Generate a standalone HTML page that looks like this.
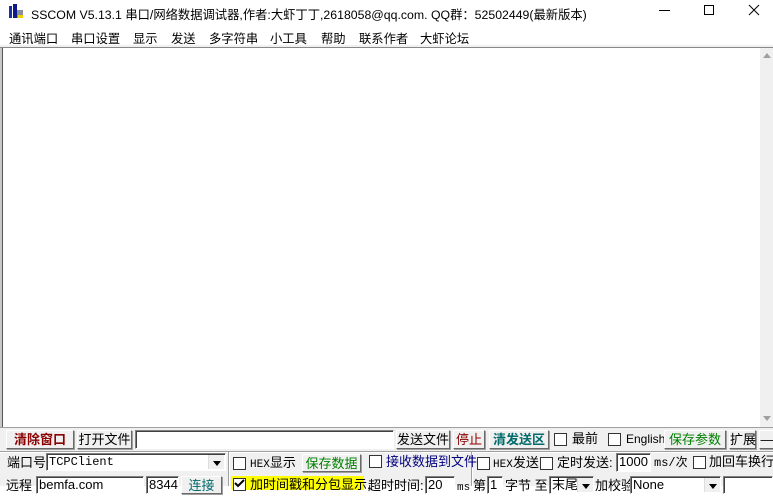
<!DOCTYPE html>
<html><head><meta charset="utf-8"><style>
*{margin:0;padding:0;box-sizing:border-box}
body{width:773px;height:486px;overflow:hidden;background:#fff;font-family:"Liberation Sans","Noto Sans CJK SC",sans-serif;font-size:12px;color:#000;position:relative}
.a{position:absolute;white-space:nowrap}
.m{position:absolute;white-space:nowrap;top:29px;font-size:12.3px}
.btn{position:absolute;background:#f0f0f0;border:1px solid;border-color:#fff #696969 #696969 #fff;box-shadow:1px 1px 0 #a0a0a0;text-align:center;font-size:13px;line-height:17px;white-space:nowrap}
.inp{position:absolute;background:#fff;border:1px solid;border-color:#808080 #fff #fff #808080;box-shadow:inset 1px 1px 0 #404040;font-size:13px;line-height:16px;padding-left:2px;white-space:nowrap;overflow:hidden}
.cb{position:absolute;width:13px;height:13px;background:#fff;border:1px solid #333}
.t{position:absolute;font-size:13px;white-space:nowrap;line-height:16px}
.mono{font-family:"Liberation Mono","Noto Sans CJK SC",monospace}
.dd{position:absolute;width:16px;background:#f0f0f0;border-left:1px solid #ddd}
.dd:after{content:"";position:absolute;left:4px;top:6px;border:4px solid transparent;border-top:5px solid #000}
</style></head><body>
<svg class="a" style="left:8px;top:4px" width="16" height="16"><rect x="1" y="2" width="3" height="12" fill="#1a2fa0"/><rect x="5" y="0" width="4" height="14" fill="#0c1a8a"/><rect x="9" y="6" width="6" height="8" fill="#8a8fa0"/><rect x="10" y="11" width="5" height="3" fill="#f0d000"/></svg>
<div class="a" style="left:31px;top:5px;font-size:12.3px">SSCOM V5.13.1 串口/网络数据调试器,作者:大虾丁丁,2618058@qq.com. QQ群：52502449(最新版本)</div>
<div class="a" style="left:659px;top:10px;width:11px;height:1px;background:#000"></div>
<div class="a" style="left:704px;top:5px;width:10px;height:10px;border:1px solid #000"></div>
<svg class="a" style="left:748px;top:4px" width="12" height="12"><path d="M1 1L11 11M11 1L1 11" stroke="#000" stroke-width="1"/></svg>
<div class="m" style="left:9px">通讯端口</div>
<div class="m" style="left:71px">串口设置</div>
<div class="m" style="left:133px">显示</div>
<div class="m" style="left:171px">发送</div>
<div class="m" style="left:209px">多字符串</div>
<div class="m" style="left:270px">小工具</div>
<div class="m" style="left:321px">帮助</div>
<div class="m" style="left:359px">联系作者</div>
<div class="m" style="left:420px">大虾论坛</div>
<div class="a" style="left:0;top:45px;width:773px;height:2px;background:#f0f0f0"></div>
<div class="a" style="left:0;top:47px;width:773px;height:1px;background:#888"></div>
<div class="a" style="left:0;top:48px;width:3px;height:380px;background:#c8c8c8"></div>
<div class="a" style="left:2px;top:48px;width:1px;height:380px;background:#555"></div>
<div class="a" style="left:760px;top:48px;width:13px;height:379px;background:#f0f0f0"></div>
<div class="a" style="left:763px;top:53px;border:4px solid transparent;border-bottom:5px solid #a0a0a0;border-top:0"></div>
<div class="a" style="left:763px;top:416px;border:4px solid transparent;border-top:5px solid #a0a0a0;border-bottom:0"></div>
<div class="a" style="left:0;top:427px;width:773px;height:59px;background:#f0f0f0"></div>
<div class="a" style="left:0;top:427px;width:773px;height:1px;background:#a0a0a0"></div>
<div class="btn" style="left:6px;top:430px;width:68px;height:19px;color:#8b0000;font-weight:bold">清除窗口</div>
<div class="btn" style="left:77px;top:430px;width:55px;height:19px">打开文件</div>
<div class="inp" style="left:135px;top:430px;width:259px;height:19px"></div>
<div class="btn" style="left:396px;top:430px;width:54px;height:19px">发送文件</div>
<div class="btn" style="left:453px;top:430px;width:32px;height:19px;color:#8b0000">停止</div>
<div class="btn" style="left:489px;top:430px;width:60px;height:19px;color:#006a6a;font-weight:bold">清发送区</div>
<div class="cb" style="left:554px;top:433px"></div><div class="t" style="left:572px;top:431px">最前</div>
<div class="cb" style="left:608px;top:433px"></div><div class="t" style="left:626px;top:431px;font-size:12px">English</div>
<div class="btn" style="left:664px;top:430px;width:62px;height:19px;color:#008000">保存参数</div>
<div class="btn" style="left:729px;top:430px;width:27px;height:19px">扩展</div>
<div class="btn" style="left:759px;top:430px;width:16px;height:19px">—</div>
<div class="a" style="left:0;top:451px;width:773px;height:1px;background:#a0a0a0"></div>
<div class="a" style="left:0;top:452px;width:773px;height:1px;background:#fff"></div>
<div class="a" style="left:228px;top:452px;width:2px;height:34px;border-left:1px solid #a0a0a0;border-right:1px solid #fff"></div>
<div class="a" style="left:471px;top:452px;width:2px;height:34px;border-left:1px solid #a0a0a0;border-right:1px solid #fff"></div>
<div class="t" style="left:7px;top:455px">端口号</div>
<div class="inp mono" style="left:46px;top:453px;width:180px;height:18px;font-size:12px">TCPClient</div>
<div class="dd" style="left:208px;top:455px;height:14px"></div>
<div class="cb" style="left:233px;top:457px"></div><div class="t" style="left:250px;top:455px"><span class="mono" style="font-size:11px">HEX</span>显示</div>
<div class="btn" style="left:302px;top:454px;width:59px;height:18px;color:#008000">保存数据</div>
<div class="cb" style="left:369px;top:455px"></div><div class="t" style="left:386px;top:454px;color:#00007f">接收数据到文件</div>
<div class="cb" style="left:477px;top:457px"></div><div class="t" style="left:493px;top:455px"><span class="mono" style="font-size:11px">HEX</span>发送</div>
<div class="cb" style="left:540px;top:457px"></div><div class="t" style="left:557px;top:455px">定时发送:</div>
<div class="inp" style="left:616px;top:453px;width:35px;height:19px">1000</div>
<div class="t mono" style="left:654px;top:455px;font-size:12px">ms/次</div>
<div class="cb" style="left:693px;top:456px"></div><div class="t" style="left:709px;top:454px">加回车换行</div>
<div class="t" style="left:6px;top:478px">远程</div>
<div class="inp" style="left:36px;top:476px;width:108px;height:18px">bemfa.com</div>
<div class="inp" style="left:146px;top:476px;width:33px;height:18px">8344</div>
<div class="btn" style="left:181px;top:476px;width:41px;height:18px;color:#006a6a">连接</div>
<div class="a" style="left:231px;top:476px;width:133px;height:14px;background:#ffff00"></div>
<div class="cb" style="left:233px;top:478px"></div>
<svg class="a" style="left:234px;top:479px" width="11" height="9"><path d="M1 4L4 7L10 1" stroke="#000" stroke-width="2" fill="none"/></svg>
<div class="t" style="left:250px;top:477px">加时间戳和分包显示.</div>
<div class="t" style="left:368px;top:478px">超时时间:</div>
<div class="inp" style="left:425px;top:476px;width:30px;height:18px">20</div>
<div class="t mono" style="left:457px;top:480px;font-size:11px">ms</div>
<div class="t" style="left:473px;top:478px">第</div>
<div class="inp" style="left:487px;top:476px;width:16px;height:18px">1</div>
<div class="t" style="left:505px;top:478px">字节 至</div>
<div class="inp" style="left:549px;top:476px;width:45px;height:18px">末尾</div>
<div class="dd" style="left:577px;top:478px;height:14px"></div>
<div class="t" style="left:595px;top:478px">加校验</div>
<div class="inp" style="left:630px;top:476px;width:91px;height:18px">None</div>
<div class="dd" style="left:704px;top:478px;height:14px"></div>
<div class="inp" style="left:723px;top:476px;width:50px;height:18px"></div>
</body></html>
